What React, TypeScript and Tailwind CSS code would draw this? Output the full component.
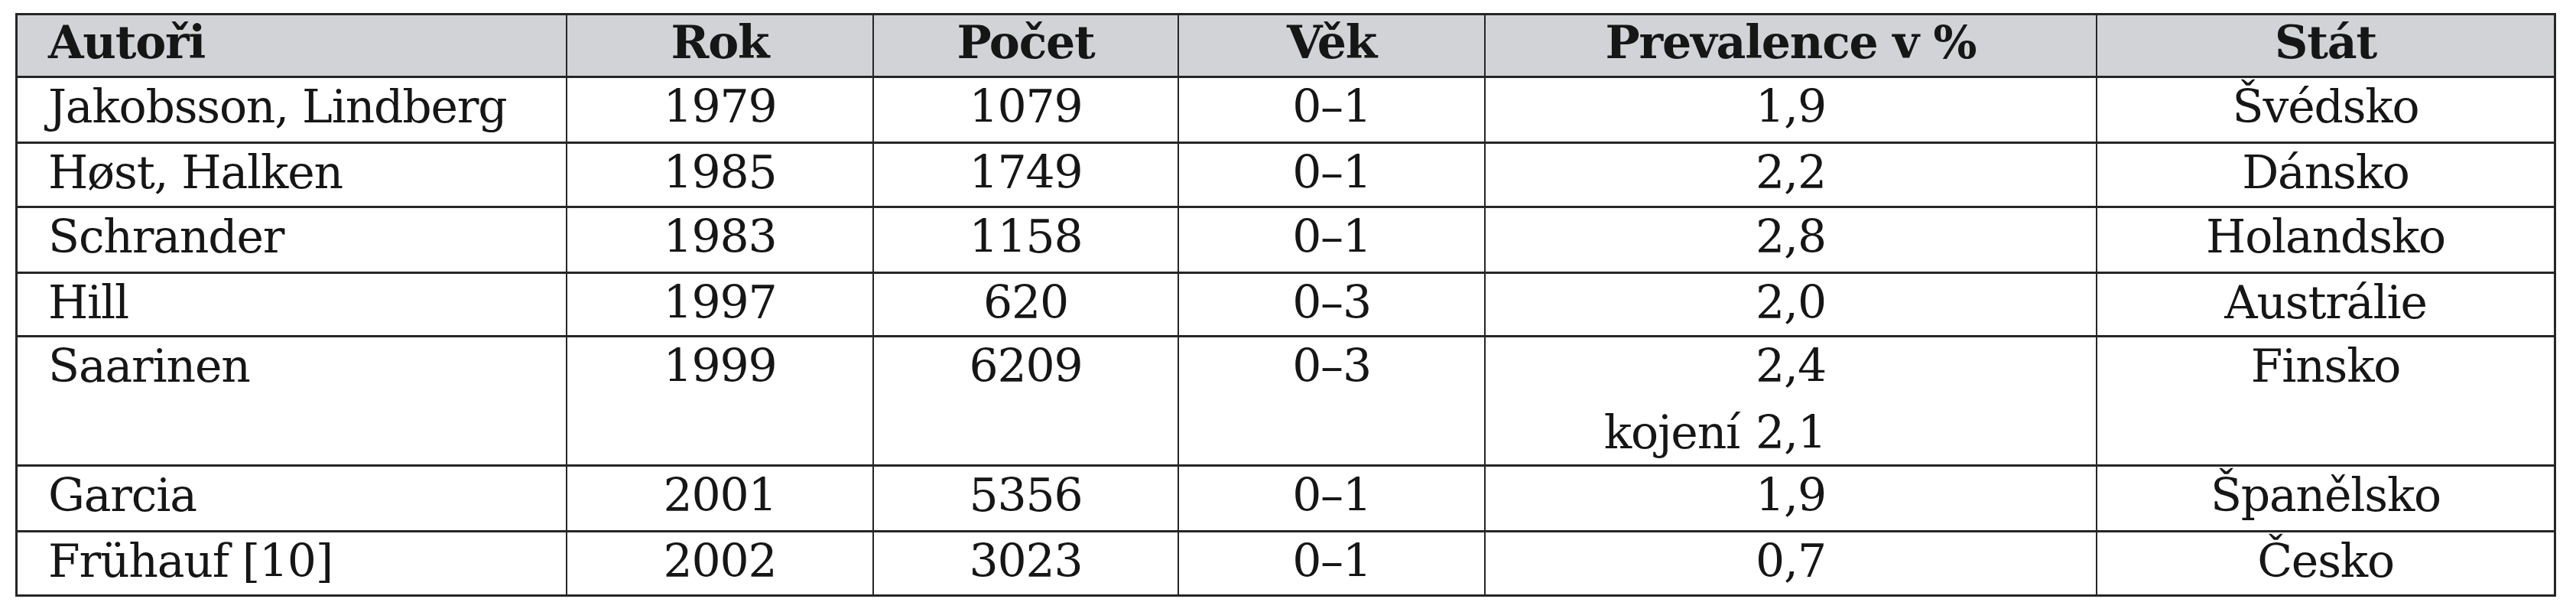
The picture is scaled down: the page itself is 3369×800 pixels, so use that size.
const columns = [
  { title: 'Autoři', width: 'w-[719px]', align: 'text-left pl-[40px]' },
  { title: 'Rok', width: 'w-[401px]', align: 'text-center' },
  { title: 'Počet', width: 'w-[399px]', align: 'text-center' },
  { title: 'Věk', width: 'w-[401px]', align: 'text-center' },
  { title: 'Prevalence v %', width: 'w-[800px]', align: 'text-center' },
  { title: 'Stát', width: 'w-[597px]', align: 'text-center' },
];

type Row = {
  height: string;
  cells: string[];
  note?: string;
};

const rows: Row[] = [
  { height: 'h-[86px]', cells: ['Jakobsson, Lindberg', '1979', '1079', '0–1', '1,9', 'Švédsko'] },
  { height: 'h-[84px]', cells: ['Høst, Halken', '1985', '1749', '0–1', '2,2', 'Dánsko'] },
  { height: 'h-[86px]', cells: ['Schrander', '1983', '1158', '0–1', '2,8', 'Holandsko'] },
  { height: 'h-[83px]', cells: ['Hill', '1997', '620', '0–3', '2,0', 'Austrálie'] },
  { height: 'h-[169px]', cells: ['Saarinen', '1999', '6209', '0–3', '2,4', 'Finsko'], note: '2,1' },
  { height: 'h-[86px]', cells: ['Garcia', '2001', '5356', '0–1', '1,9', 'Španělsko'] },
  { height: 'h-[81px]', cells: ['Frühauf [10]', '2002', '3023', '0–1', '0,7', 'Česko'] },
];

function Cell({ col, last, children }: { col: number; last: boolean; children: React.ReactNode }) {
  const c = columns[col];
  return (
    <div className={`${c.width} ${c.align} ${last ? '' : 'border-r-2 border-[#262626]'} shrink-0 pt-[7px]`}>
      {children}
    </div>
  );
}

export default function App() {
  return (
    <div className="min-h-screen bg-white pt-[17px] pl-[20px] font-['DejaVu_Serif',serif] text-[60px] leading-none tracking-[-1.2px] text-[#161616]">
      <div className="w-fit border-[3px] border-[#262626]">
        {/* header */}
        <div className="flex h-[82px] border-b-[3px] border-[#262626] bg-[#d1d3d6] font-bold">
          {columns.map((c, i) => (
            <div
              key={c.title}
              className={`${c.width} ${c.align} ${i === columns.length - 1 ? '' : 'border-r-2 border-[#262626]'} shrink-0 pt-[5px]`}
            >
              {c.title}
            </div>
          ))}
        </div>

        {rows.map((r, ri) => (
          <div
            key={r.cells[0]}
            className={`flex ${r.height} ${ri === rows.length - 1 ? '' : 'border-b-[3px] border-[#262626]'}`}
          >
            {r.cells.map((v, ci) => (
              <Cell key={ci} col={ci} last={ci === r.cells.length - 1}>
                <div>{v}</div>
                {ci === 4 && r.note && (
                  <div className="mt-[27px] grid grid-cols-[1fr_auto_1fr]">
                    <span className="pr-[21px] text-right">kojení</span>
                    <span>{r.note}</span>
                    <span />
                  </div>
                )}
              </Cell>
            ))}
          </div>
        ))}
      </div>
    </div>
  );
}
